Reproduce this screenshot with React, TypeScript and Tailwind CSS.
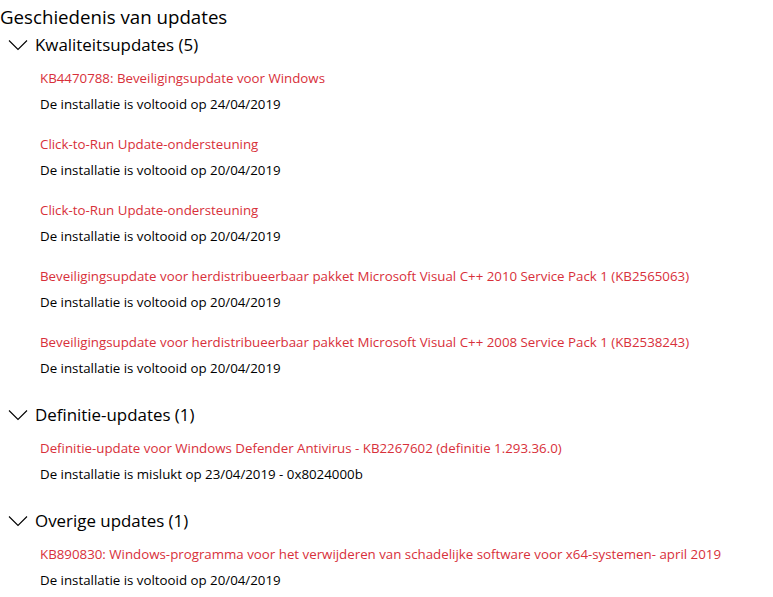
const sections = [
  {
    title: "Kwaliteitsupdates (5)",
    items: [
      {
        name: "KB4470788: Beveiligingsupdate voor Windows",
        status: "De installatie is voltooid op 24/04/2019",
      },
      {
        name: "Click-to-Run Update-ondersteuning",
        status: "De installatie is voltooid op 20/04/2019",
      },
      {
        name: "Click-to-Run Update-ondersteuning",
        status: "De installatie is voltooid op 20/04/2019",
      },
      {
        name: "Beveiligingsupdate voor herdistribueerbaar pakket Microsoft Visual C++ 2010 Service Pack 1 (KB2565063)",
        status: "De installatie is voltooid op 20/04/2019",
      },
      {
        name: "Beveiligingsupdate voor herdistribueerbaar pakket Microsoft Visual C++ 2008 Service Pack 1 (KB2538243)",
        status: "De installatie is voltooid op 20/04/2019",
      },
    ],
  },
  {
    title: "Definitie-updates (1)",
    items: [
      {
        name: "Definitie-update voor Windows Defender Antivirus - KB2267602 (definitie 1.293.36.0)",
        status: "De installatie is mislukt op 23/04/2019 - 0x8024000b",
      },
    ],
  },
  {
    title: "Overige updates (1)",
    items: [
      {
        name: "KB890830: Windows-programma voor het verwijderen van schadelijke software voor x64-systemen- april 2019",
        status: "De installatie is voltooid op 20/04/2019",
      },
    ],
  },
];

function Chevron() {
  return (
    <svg width="20" height="12" viewBox="0 0 20 12" className="shrink-0">
      <path d="M1 1.5 L10 10.5 L19 1.5" fill="none" stroke="#000" strokeWidth="1.1" />
    </svg>
  );
}

export default function App() {
  return (
    <div className="min-h-[597px] w-[773px] overflow-hidden bg-white font-['Open_Sans',sans-serif] text-black">
      <h1 className="h-[34px] whitespace-nowrap text-[18.7px] leading-[34px] font-normal">
        Geschiedenis van updates
      </h1>

      {sections.map((section) => (
        <section key={section.title} className="mb-[9px]">
          <div className="flex h-[22px] items-center gap-[7px] pl-[8px]">
            <Chevron />
            <h2 className="whitespace-nowrap text-[16.9px] leading-[22px] font-normal">
              {section.title}
            </h2>
          </div>

          <ul className="pt-[9px] pl-[40px]">
            {section.items.map((item, i) => (
              <li key={i} className="flex h-[66px] flex-col">
                <span className="h-[26px] whitespace-nowrap text-[13.3px] leading-[26px] text-[#d8303a]">
                  {item.name}
                </span>
                <span className="h-[26px] whitespace-nowrap text-[13.3px] leading-[26px]">
                  {item.status}
                </span>
              </li>
            ))}
          </ul>
        </section>
      ))}
    </div>
  );
}
